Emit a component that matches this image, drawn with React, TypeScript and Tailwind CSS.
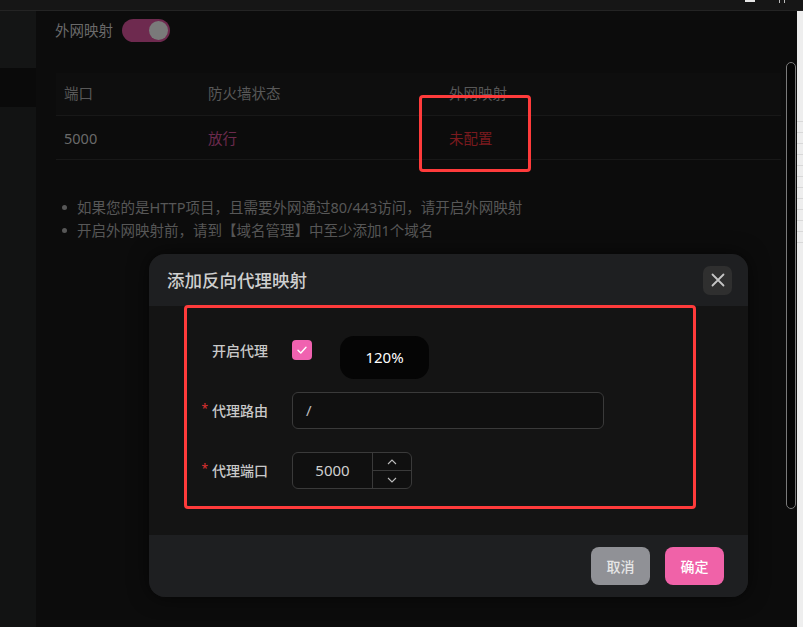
import React from "react";

const font = { fontFamily: '"Noto Sans", "Noto Sans CJK SC", sans-serif' };

function FormLabel({ text, required }: { text: string; required?: boolean }) {
  return (
    <div className="w-[84px] flex items-center justify-end text-[14px] font-medium text-[#c9c9c9]">
      {required && <span className="text-[#d32f2f] text-[12px] mr-[4px] -mt-[4px]">*</span>}
      <span>{text}</span>
    </div>
  );
}

export default function App() {
  return (
    <div className="relative w-[803px] h-[627px] overflow-hidden bg-[#0b0b0b] flex flex-col" style={font}>
      {/* top bar */}
      <div className="h-[11px] shrink-0 bg-[#161616] border-b border-[#242424] relative">
        <div className="absolute left-[745px] top-0 w-[10px] h-[2px] bg-[#e5e5e5]" />
        <div className="absolute left-[779px] top-0 w-[1px] h-[3px] bg-[#bbb]" />
        <div className="absolute left-[784px] top-0 w-[1px] h-[3px] bg-[#bbb]" />
      </div>
      <div className="flex flex-1 min-h-0">
        {/* left sidebar */}
        <div className="w-[36px] shrink-0 flex flex-col">
          <div className="h-[57px] bg-[#141515]" />
          <div className="h-[39px] bg-[#0a0a0a]" />
          <div className="flex-1 bg-[#121313]" />
        </div>
        {/* main */}
        <div className="flex-1 min-w-0 bg-[#0c0c0c] pt-[8px] pl-[19px]">
          <div className="flex items-center h-[23px] gap-[9px]">
            <span className="text-[14.5px] text-[#6a6a6a]">外网映射</span>
            <div className="w-[48px] h-[23px] rounded-full bg-[#6e2a4f] flex items-center justify-end pr-[2px]">
              <div className="w-[19px] h-[19px] rounded-full bg-[#7a7a7a]" />
            </div>
          </div>
          <div className="mt-[31px] ml-[1px] mr-[10px]">
            <div className="flex items-center h-[43px] bg-[#0e0e0e] border-b border-[#181818] text-[14.5px] text-[#585858]">
              <div className="w-[152px] pl-[8px]">端口</div>
              <div className="w-[241px]">防火墙状态</div>
              <div className="flex-1">外网映射</div>
            </div>
            <div className="flex items-center h-[44px] pt-[2px] border-b border-[#181818] text-[14.5px]">
              <div className="w-[152px] pl-[8px] text-[#6a6a6a]">5000</div>
              <div className="w-[241px] text-[#6b2a4c]">放行</div>
              <div className="flex-1 text-[#7a1a1e]">未配置</div>
            </div>
          </div>
          <ul className="mt-[38px] ml-[7px] flex flex-col gap-[4px] text-[14.5px] text-[#575757]">
            <li className="flex items-center gap-[10px] h-[19px]">
              <span className="w-[5px] h-[5px] rounded-full bg-[#575757]" />
              如果您的是HTTP项目，且需要外网通过80/443访问，请开启外网映射
            </li>
            <li className="flex items-center gap-[10px] h-[19px]">
              <span className="w-[5px] h-[5px] rounded-full bg-[#575757]" />
              开启外网映射前，请到【域名管理】中至少添加1个域名
            </li>
          </ul>
        </div>
        <div className="w-[6px] shrink-0 bg-[#0c0c0c]" />
        {/* right strip */}
        <div className="w-[6px] shrink-0 bg-[#eeeeee] flex flex-col">
          <div className="h-[100px]" />
          {Array.from({ length: 12 }).map((_, i) => (
            <div key={i} className="h-[11px] border-b border-[#d8d8d8]" />
          ))}
        </div>
      </div>

      {/* scrollbar */}
      <div className="absolute left-[786px] top-[62px] w-[10px] h-[447px] rounded-full border border-[#7a7a7a] bg-[#050505]" />

      {/* annotation box top */}
      <div className="absolute left-[419px] top-[95px] w-[112px] h-[77px] border-[3px] border-[#ff3b3b] rounded-[4px]" />

      {/* modal */}
      <div className="absolute left-[149px] top-[254px] w-[599px] h-[343px] rounded-[16px] overflow-hidden flex flex-col bg-[#141414] shadow-[0_0_20px_rgba(0,0,0,0.6)]">
        <div className="h-[52px] shrink-0 bg-[#1e1f21] flex items-center justify-between pl-[18px] pr-[16px]">
          <span className="text-[17.5px] text-[#cfcfcf] font-medium">添加反向代理映射</span>
          <button className="w-[29px] h-[29px] rounded-[7px] bg-[#2f2f2f] flex items-center justify-center">
            <svg width="16" height="16" viewBox="0 0 16 16" fill="none" stroke="#c4c4c4" strokeWidth="1.8" strokeLinecap="round">
              <path d="M2.5 2.5 L13.5 13.5 M13.5 2.5 L2.5 13.5" />
            </svg>
          </button>
        </div>
        <div className="flex-1 flex flex-col pt-[34px] pl-[35px]">
          <div className="relative flex items-center h-[20px] gap-[24px]">
            <FormLabel text="开启代理" />
            <div className="w-[20px] h-[20px] rounded-[4px] bg-[#f062b0] flex items-center justify-center">
              <svg width="12" height="12" viewBox="0 0 12 12" fill="none" stroke="#ffffff" strokeWidth="1.4" strokeLinecap="round" strokeLinejoin="round">
                <path d="M2 6.2 L4.8 9 L10 3.2" />
              </svg>
            </div>
            <div className="absolute left-[156px] top-[-4px] w-[89px] h-[43px] rounded-[14px] bg-[#050505] flex items-center justify-center text-[15px] text-white">
              120%
            </div>
          </div>
          <div className="flex items-center h-[37px] gap-[24px] mt-[32px]">
            <FormLabel text="代理路由" required />
            <div className="w-[312px] h-[37px] rounded-[6px] border border-[#3a3a3a] bg-[#101010] flex items-center pl-[13px] text-[15px] text-[#bdbdbd]">
              /
            </div>
          </div>
          <div className="flex items-center h-[37px] gap-[24px] mt-[23px]">
            <FormLabel text="代理端口" required />
            <div className="w-[120px] h-[37px] rounded-[6px] border border-[#3a3a3a] bg-[#101010] flex">
              <div className="flex-1 flex items-center justify-center text-[15px] text-[#cfcfcf]">5000</div>
              <div className="w-[39px] border-l border-[#3a3a3a] flex flex-col">
                <div className="flex-1 flex items-center justify-center border-b border-[#3a3a3a]">
                  <svg width="10" height="6" viewBox="0 0 10 6" fill="none" stroke="#bdbdbd" strokeWidth="1.1">
                    <path d="M1 5 L5 1 L9 5" />
                  </svg>
                </div>
                <div className="flex-1 flex items-center justify-center">
                  <svg width="10" height="6" viewBox="0 0 10 6" fill="none" stroke="#bdbdbd" strokeWidth="1.1">
                    <path d="M1 1 L5 5 L9 1" />
                  </svg>
                </div>
              </div>
            </div>
          </div>
        </div>
        <div className="h-[62px] shrink-0 bg-[#1e1f21] flex items-center justify-end gap-[15px] pr-[24px]">
          <button className="w-[59px] h-[38px] rounded-[8px] bg-[#909196] text-[14px] text-[#e6e6e6] font-medium">取消</button>
          <button className="w-[59px] h-[38px] rounded-[8px] bg-[#f062a8] text-[14px] text-white font-medium">确定</button>
        </div>
      </div>

      {/* annotation box modal */}
      <div className="absolute left-[184px] top-[305px] w-[512px] h-[204px] border-[3px] border-[#ff3b3b] rounded-[4px]" />
    </div>
  );
}
